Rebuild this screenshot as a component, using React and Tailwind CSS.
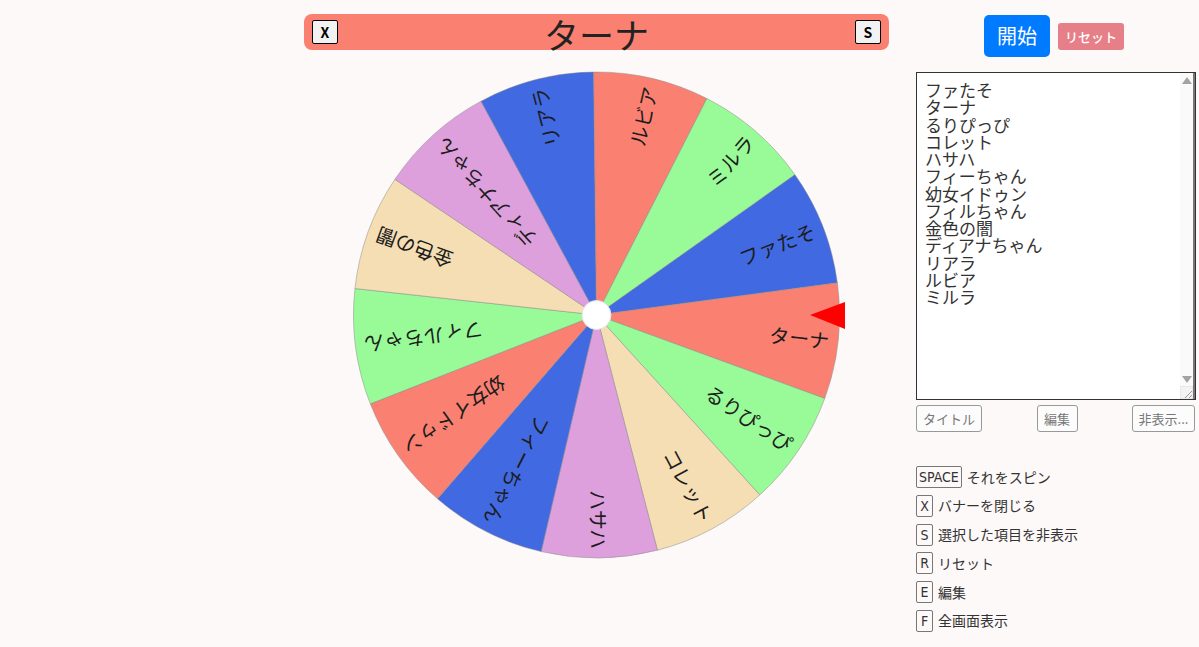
import React from "react";

const names = [
  "ファたそ",
  "ターナ",
  "るりぴっぴ",
  "コレット",
  "ハサハ",
  "フィーちゃん",
  "幼女イドゥン",
  "フィルちゃん",
  "金色の闇",
  "ディアナちゃん",
  "リアラ",
  "ルビア",
  "ミルラ",
];

const colors = ["#4169e1", "#fa8072", "#98fb98", "#f5deb3", "#dda0dd"];

const shortcuts = [
  ["SPACE", "それをスピン"],
  ["X", "バナーを閉じる"],
  ["S", "選択した項目を非表示"],
  ["R", "リセット"],
  ["E", "編集"],
  ["F", "全画面表示"],
];

const jp = { fontFamily: '"Noto Sans CJK JP", "Noto Sans", sans-serif' };

const Wheel = () => {
  const cx = 292.5;
  const cy = 255;
  const r = 243;
  const step = 360 / names.length;
  const first = -35.29;
  const pt = (deg) => {
    const a = (deg * Math.PI) / 180;
    return [cx + r * Math.cos(a), cy + r * Math.sin(a)];
  };
  return (
    <svg width="585" height="510" viewBox="0 0 585 510" className="block">
      {names.map((n, i) => {
        const s = first + i * step;
        const [x1, y1] = pt(s);
        const [x2, y2] = pt(s + step);
        return (
          <path
            key={n}
            d={`M${cx} ${cy} L${x1} ${y1} A${r} ${r} 0 0 1 ${x2} ${y2} Z`}
            fill={colors[i % 5]}
            stroke="#8a8a8a"
            strokeWidth="0.5"
          />
        );
      })}
      {names.map((n, i) => {
        const mid = first + i * step + step / 2;
        return (
          <text
            key={n}
            x={cx + 234}
            y={cy}
            textAnchor="end"
            dominantBaseline="central"
            fontSize="20"
            fill="#1c1c1c"
            style={jp}
            transform={`rotate(${mid} ${cx} ${cy})`}
          >
            {n}
          </text>
        );
      })}
      <circle cx={cx} cy={cy} r="14.5" fill="#fff" stroke="#e2e2e2" strokeWidth="1" />
      <polygon points="506,255 541,242 541,269" fill="#ff0000" />
    </svg>
  );
};

const App = () => {
  return (
    <div className="min-h-screen w-full bg-[#fdf9f8] flex" style={jp}>
      <div className="ml-[304px] w-[585px] flex flex-col">
        <div className="mt-[14px] h-[36px] rounded-[8px] bg-[#fa8072] flex items-center justify-between px-[8px]">
          <button className="w-[26px] h-[24px] bg-[#f2f2f2] border-[1.5px] border-black rounded-[2px] text-[14px] font-bold text-black flex items-center justify-center leading-none">
            X
          </button>
          <div className="text-[35px] text-[#222] leading-none pt-[2px]">ターナ</div>
          <button className="w-[26px] h-[24px] bg-[#f2f2f2] border-[1.5px] border-black rounded-[2px] text-[14px] font-bold text-black flex items-center justify-center leading-none">
            S
          </button>
        </div>
        <div className="mt-[10px]">
          <Wheel />
        </div>
      </div>

      <div className="ml-[27px] w-[280px] flex flex-col">
        <div className="mt-[15px] flex items-center justify-center gap-[8px] pr-[4px]">
          <button className="w-[66px] h-[42px] rounded-[5px] bg-[#007bff] text-white text-[20px] leading-none">
            開始
          </button>
          <button className="w-[66px] h-[27px] rounded-[3px] bg-[#e67f88] text-white text-[13px] font-medium leading-none">
            リセット
          </button>
        </div>

        <div className="mt-[15px] h-[328px] border border-[#333] bg-white flex">
          <div className="flex-1 pl-[8px] pt-[8px] text-[17px] leading-[17.25px] text-[#333]">
            {names.map((n) => (
              <div key={n}>{n}</div>
            ))}
          </div>
          <div className="w-[15px] bg-[#fafafa] border-r-2 border-[#777] flex flex-col items-center justify-between pt-[4px]">
            <div className="w-0 h-0 border-l-[5px] border-r-[5px] border-b-[7px] border-l-transparent border-r-transparent border-b-[#a3a3a3]" />
            <div className="flex flex-col items-center">
              <div className="w-0 h-0 border-l-[5px] border-r-[5px] border-t-[7px] border-l-transparent border-r-transparent border-t-[#a3a3a3]" />
              <svg width="13" height="13" viewBox="0 0 13 13" className="mt-[3px]">
                <rect x="0" y="0" width="13" height="13" fill="#f3f3f3" stroke="#ddd" />
                <path d="M12 5 L5 12 M12 9 L9 12" stroke="#999" strokeWidth="1" />
              </svg>
            </div>
          </div>
        </div>

        <div className="mt-[5px] flex justify-between text-[13px] text-[#777]">
          <button className="w-[66px] h-[27px] border border-[#999] rounded-[3px] bg-[#fcfcfc]">タイトル</button>
          <button className="w-[41px] h-[27px] border border-[#999] rounded-[3px] bg-[#fcfcfc]">編集</button>
          <button className="w-[63px] h-[27px] border border-[#999] rounded-[3px] bg-[#fcfcfc] mr-[1px]">非表示...</button>
        </div>

        <div className="mt-[34px] flex flex-col gap-[6.8px]">
          {shortcuts.map(([k, t]) => (
            <div key={k} className="flex items-center h-[22px]">
              <span
                className="h-[22px] px-[2px] min-w-[17px] border border-[#777] rounded-[2px] text-[14px] text-[#333] flex items-center justify-center leading-none"
                style={{ fontFamily: '"DejaVu Sans Condensed", "Liberation Sans Narrow", "DejaVu Sans", sans-serif', fontStretch: "condensed" }}
              >
                {k}
              </span>
              <span className="ml-[5px] text-[14px] text-[#333]">{t}</span>
            </div>
          ))}
        </div>
      </div>
    </div>
  );
};

export default App;
